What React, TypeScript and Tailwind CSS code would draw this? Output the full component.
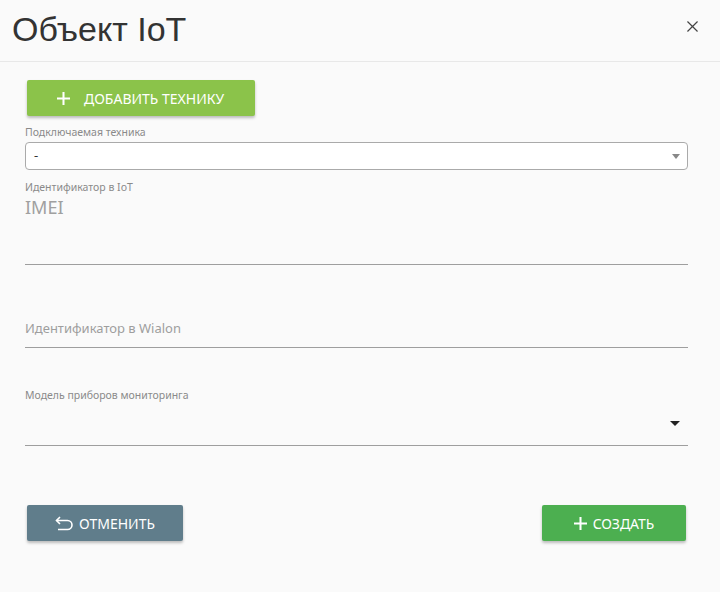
import * as React from "react";

const ui = "font-['Noto_Sans','Open_Sans',sans-serif]";

function Plus({ className }: { className?: string }) {
  return (
    <svg viewBox="0 0 14 14" className={className} fill="none" stroke="currentColor" strokeWidth="2.2">
      <path d="M7 0v14M0 7h14" />
    </svg>
  );
}

function Undo() {
  return (
    <svg viewBox="0 0 20 16" className="w-[20px] h-[16px]" fill="none" stroke="currentColor" strokeWidth="1.6">
      <path d="M5 2L1.5 5.5 5 9" />
      <path d="M1.5 5.5h11a4.5 4.5 0 0 1 0 9H3" />
    </svg>
  );
}

export default function App() {
  return (
    <div className={`w-[720px] h-[592px] bg-[#fafafa] ${ui}`}>
      <div className="h-[62px] border-b border-[#e8e8e8] flex items-center justify-between pl-[12px] pr-[22px]">
        <h1 className="font-['Liberation_Sans',Arial,sans-serif] text-[34px] text-[#333] leading-none -mt-[3px]">
          Объект IoT
        </h1>
        <svg viewBox="0 0 12 12" className="w-[11px] h-[11px] text-[#444] -mt-[8px]" stroke="currentColor" strokeWidth="1.3">
          <path d="M0.5 0.5l11 11M11.5 0.5l-11 11" />
        </svg>
      </div>

      <div className="px-[25px] pr-[32px]">
        <button className="mt-[18px] ml-[2px] w-[228px] h-[36px] bg-[#8bc34a] text-white rounded-[2px] shadow-[0_2px_3px_rgba(0,0,0,0.25)] flex items-center pl-[30px] gap-[14px]">
          <Plus className="w-[13px] h-[13px]" />
          <span className="text-[14px]">ДОБАВИТЬ ТЕХНИКУ</span>
        </button>

        <div className="mt-[9px] text-[10.5px] text-[#8a8a8a] leading-[14px]">Подключаемая техника</div>
        <div className="mt-[3px] h-[28px] bg-white border border-[#aaa] rounded-[4px] flex items-center justify-between pl-[8px] pr-[7px]">
          <span className="text-[13px] text-[#333]">-</span>
          <span className="w-0 h-0 border-x-[4px] border-x-transparent border-t-[5px] border-t-[#888]"></span>
        </div>

        <div className="mt-[10px] text-[10.5px] text-[#8a8a8a] leading-[14px]">Идентификатор в IoT</div>
        <div className="mt-[1px] text-[18px] text-[#a0a0a0] leading-[24px]">IMEI</div>
        <div className="mt-[45px] border-b border-[#9e9e9e]"></div>

        <div className="mt-[54px] text-[13px] text-[#9e9e9e] leading-[18px]">Идентификатор в Wialon</div>
        <div className="mt-[10px] border-b border-[#9e9e9e]"></div>

        <div className="mt-[40px] text-[10.5px] text-[#8a8a8a] leading-[14px]">Модель приборов мониторинга</div>
        <div className="h-[43px] flex items-center justify-end pr-[8px]">
          <span className="w-0 h-0 border-x-[5px] border-x-transparent border-t-[5px] border-t-[#222]"></span>
        </div>
        <div className="border-b border-[#9e9e9e]"></div>

        <div className="mt-[59px] flex justify-between pl-[2px] pr-[2px]">
          <button className="w-[156px] h-[36px] bg-[#607d8b] text-white rounded-[2px] shadow-[0_2px_3px_rgba(0,0,0,0.25)] flex items-center justify-center gap-[4px]">
            <Undo />
            <span className="text-[14px]">ОТМЕНИТЬ</span>
          </button>
          <button className="w-[144px] h-[36px] bg-[#4caf50] text-white rounded-[2px] shadow-[0_2px_3px_rgba(0,0,0,0.25)] flex items-center justify-center gap-[6px]">
            <Plus className="w-[13px] h-[13px]" />
            <span className="text-[14px]">СОЗДАТЬ</span>
          </button>
        </div>
      </div>
    </div>
  );
}
